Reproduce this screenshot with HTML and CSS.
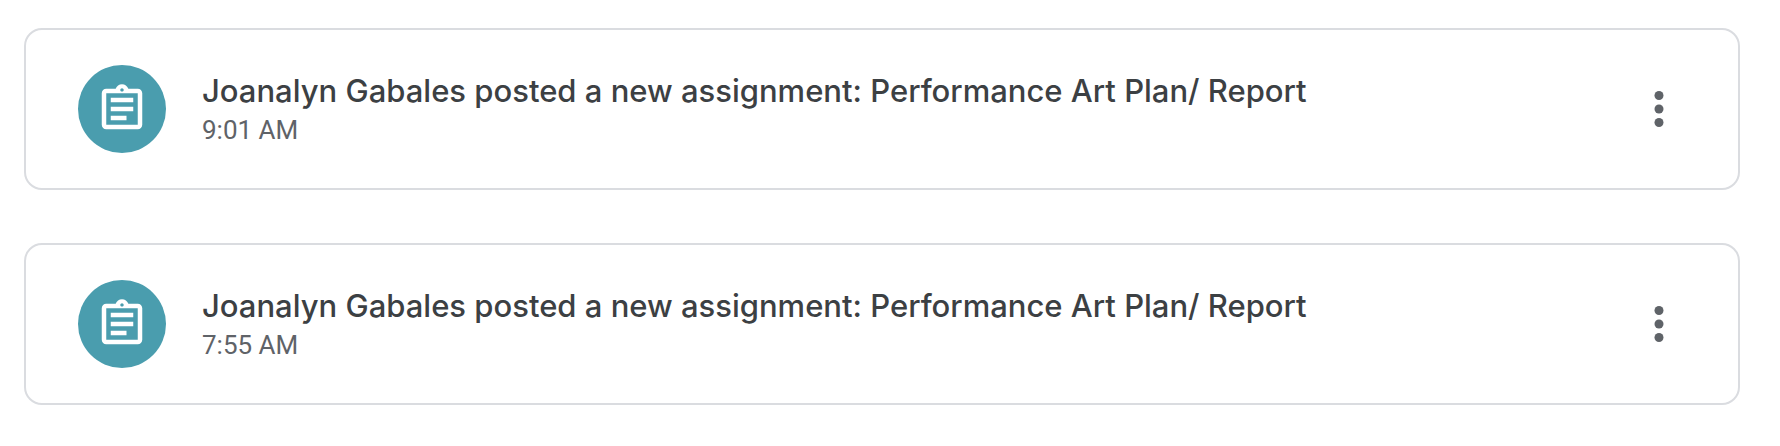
FILE: index.html
```html
<!DOCTYPE html>
<html lang="en">
<head>
<meta charset="utf-8">
<meta name="viewport" content="width=device-width, initial-scale=1">
<title>Class stream</title>
<link rel="stylesheet" href="styles.css">
</head>
<body>
<main class="stream">
  <article class="card">
    <span class="badge">
      <svg class="icon" viewBox="0 0 24 24" aria-hidden="true"><path d="M7 15h7v2H7zm0-4h10v2H7zm0-4h10v2H7zm12-4h-4.18C14.4 1.84 13.3 1 12 1s-2.4.84-2.82 2H5c-1.1 0-2 .9-2 2v14c0 1.1.9 2 2 2h14c1.1 0 2-.9 2-2V5c0-1.1-.9-2-2-2zm-7-.25c.41 0 .75.34.75.75s-.34.75-.75.75-.75-.34-.75-.75.34-.75.75-.75zM19 19H5V5h14v14z"/></svg>
    </span>
    <div class="body">
      <h2 class="title">Joanalyn Gabales posted a new assignment: Performance Art Plan/ Report</h2>
      <time class="time" datetime="09:01">9:01 AM</time>
    </div>
    <button class="menu" type="button" aria-label="More options">
      <svg class="icon" viewBox="0 0 24 24" aria-hidden="true"><circle cx="12" cy="6" r="2"/><circle cx="12" cy="12" r="2"/><circle cx="12" cy="18" r="2"/></svg>
    </button>
  </article>
  <article class="card">
    <span class="badge">
      <svg class="icon" viewBox="0 0 24 24" aria-hidden="true"><path d="M7 15h7v2H7zm0-4h10v2H7zm0-4h10v2H7zm12-4h-4.18C14.4 1.84 13.3 1 12 1s-2.4.84-2.82 2H5c-1.1 0-2 .9-2 2v14c0 1.1.9 2 2 2h14c1.1 0 2-.9 2-2V5c0-1.1-.9-2-2-2zm-7-.25c.41 0 .75.34.75.75s-.34.75-.75.75-.75-.34-.75-.75.34-.75.75-.75zM19 19H5V5h14v14z"/></svg>
    </span>
    <div class="body">
      <h2 class="title">Joanalyn Gabales posted a new assignment: Performance Art Plan/ Report</h2>
      <time class="time" datetime="07:55">7:55 AM</time>
    </div>
    <button class="menu" type="button" aria-label="More options">
      <svg class="icon" viewBox="0 0 24 24" aria-hidden="true"><circle cx="12" cy="6" r="2"/><circle cx="12" cy="12" r="2"/><circle cx="12" cy="18" r="2"/></svg>
    </button>
  </article>
</main>
</body>
</html>
```
FILE: styles.css
```css
* {
  box-sizing: border-box;
}

body {
  margin: 0;
  background: #fff;
  font-family: Roboto, "Liberation Sans", sans-serif;
}

.stream {
  display: flex;
  flex-direction: column;
  gap: 53px;
  padding: 28px 40px 40px 24px;
}

.card {
  display: flex;
  align-items: center;
  gap: 36px;
  padding: 35px 52px;
  border: 2px solid #dadce0;
  border-radius: 18px;
}

.badge {
  display: flex;
  flex: none;
  align-items: center;
  justify-content: center;
  width: 88px;
  height: 88px;
  border-radius: 50%;
  background: #4a9dae;
  color: #fff;
}

.icon {
  display: block;
  width: 54px;
  height: 54px;
  fill: currentColor;
}

.body {
  flex: 1;
  min-width: 0;
}

.title {
  margin: 0;
  color: #3c4043;
  font-family: Inter, Roboto, sans-serif;
  font-size: 31px;
  font-weight: 500;
  line-height: 42px;
}

.time {
  display: block;
  color: #5f6368;
  font-size: 26px;
  line-height: 36px;
}

.menu {
  flex: none;
  padding: 0;
  border: 0;
  background: none;
  color: #5f6368;
  cursor: pointer;
}
```
